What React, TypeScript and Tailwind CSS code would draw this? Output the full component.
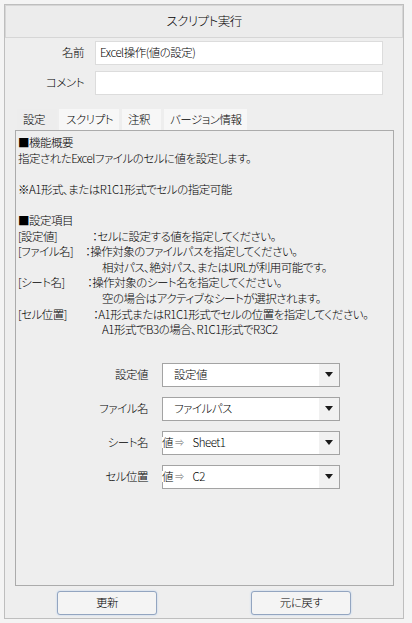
const Arrow = () => (
  <svg width="8" height="5" viewBox="0 0 8 5">
    <path d="M0 0 H8 L4 5 Z" fill="#1a1a1a" />
  </svg>
);

function Select({ label, value, prefix }: { label: string; value: string; prefix?: boolean }) {
  return (
    <div className="flex items-center h-[24px]">
      <div className="w-[131px] text-right pr-[1px]">{label}</div>
      <div className="ml-[13px] w-[178px] h-[24px] border border-[#a3a3a3] bg-white flex">
        {prefix ? (
          <div className="flex-1 flex items-center -ml-[1px]">
            <span className="bg-white">値</span>
            <span className="ml-[2px] text-[9px] text-[#666]">⇒</span>
            <span className="ml-[9px]">{value}</span>
          </div>
        ) : (
          <div className="flex-1 flex items-center pl-[11px]">{value}</div>
        )}
        <div className="w-[20px] bg-[#f1f1f1] flex items-center justify-center">
          <Arrow />
        </div>
      </div>
    </div>
  );
}

const Btn = ({ children }: { children: string }) => (
  <button className="w-[100px] h-[24px] rounded-[3px] border border-[#93a5c0] bg-[#f4f4f4] shadow-[0_0_2px_#b4cdee]">
    {children}
  </button>
);

export default function App() {
  return (
    <div className="w-[412px] h-[623px] bg-[#f4f4f4] pt-[4px] pl-[4px] text-[11.5px] tracking-[-0.5px] text-black font-light font-['Noto_Sans_CJK_JP',sans-serif] [font-feature-settings:'palt'] leading-none whitespace-nowrap">
      <div className="w-[400px] h-[615px] border border-[#bebebe] bg-[#eeeeee] flex flex-col">
        <div className="h-[33px] border border-[#d6d6d6] bg-[#ececec] flex items-center justify-center text-[12.5px]">
          スクリプト実行
        </div>

        <div className="mt-[3px] flex flex-col gap-[6px]">
          <div className="flex items-center">
            <div className="w-[79px] text-right">名前</div>
            <div className="ml-[11px] w-[288px] h-[24px] bg-white border border-[#dcdcdc] flex items-center pl-[4px]">
              Excel操作(値の設定)
            </div>
          </div>
          <div className="flex items-center">
            <div className="w-[79px] text-right">コメント</div>
            <div className="ml-[11px] w-[288px] h-[24px] bg-white border border-[#dcdcdc]" />
          </div>
        </div>

        <div className="mt-[14px] ml-[12px] flex gap-[2px] h-[21px]">
          <div className="w-[40px] bg-[#ededed] flex items-center pl-[6px]">設定</div>
          <div className="w-[60px] bg-[#f7f7f7] flex items-center pl-[7px]">スクリプト</div>
          <div className="ml-[1px] w-[39px] bg-[#f7f7f7] flex items-center pl-[6px]">注釈</div>
          <div className="ml-[1px] w-[83px] bg-[#f7f7f7] flex items-center pl-[6px]">バージョン情報</div>
        </div>

        <div className="ml-[10px] w-[379px] h-[456px] border border-[#ababab] bg-[#eeeeee] pt-[4px] pl-[2px]">
          <div className="leading-[15.6px]">
            <div>■機能概要</div>
            <div>指定されたExcelファイルのセルに値を設定します。</div>
            <div>&nbsp;</div>
            <div>※A1形式、またはR1C1形式でセルの指定可能</div>
            <div>&nbsp;</div>
            <div>■設定項目</div>
            <div className="flex">
              <span className="w-[74px]">[設定値]</span>
              <span>：セルに設定する値を指定してください。</span>
            </div>
            <div className="flex">
              <span className="w-[67px]">[ファイル名]</span>
              <span>：操作対象のファイルパスを指定してください。</span>
            </div>
            <div className="pl-[84px]">相対パス、絶対パス、またはURLが利用可能です。</div>
            <div className="flex">
              <span className="w-[69px]">[シート名]</span>
              <span>：操作対象のシート名を指定してください。</span>
            </div>
            <div className="pl-[84px]">空の場合はアクティブなシートが選択されます。</div>
            <div className="flex">
              <span className="w-[75px]">[セル位置]</span>
              <span>：A1形式またはR1C1形式でセルの位置を指定してください。</span>
            </div>
            <div className="pl-[84px]">A1形式でB3の場合、R1C1形式でR3C2</div>
          </div>

          <div className="mt-[25px] flex flex-col gap-[10px]">
            <Select label="設定値" value="設定値" />
            <Select label="ファイル名" value="ファイルパス" />
            <Select label="シート名" value="Sheet1" prefix />
            <Select label="セル位置" value="C2" prefix />
          </div>
        </div>

        <div className="mt-[5px] flex">
          <div className="ml-[52px]">
            <Btn>更新</Btn>
          </div>
          <div className="ml-[94px]">
            <Btn>元に戻す</Btn>
          </div>
        </div>
      </div>
    </div>
  );
}
